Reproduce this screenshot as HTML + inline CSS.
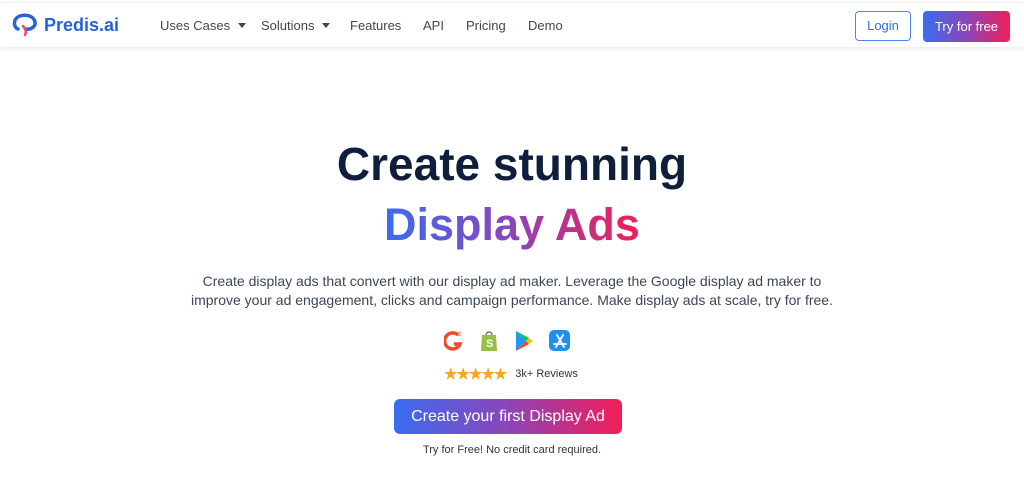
<!DOCTYPE html>
<html><head><meta charset="utf-8"><style>
*{margin:0;padding:0;box-sizing:border-box}
body{width:1024px;height:490px;background:#fff;font-family:"Liberation Sans",sans-serif;position:relative;overflow:hidden}
.nav{position:absolute;top:2px;left:0;width:1024px;height:45px;background:#fff;box-shadow:0 2px 4px rgba(0,0,0,.08);border-top:1px solid #eee}
.logo{position:absolute;left:12px;top:10px;display:flex;align-items:center}
.logo span{font-size:18px;font-weight:bold;color:#2563d6;margin-left:6px}
.menu{position:absolute;top:15px;font-size:13px;color:#3f4651}
.tri{display:inline-block;border-left:4px solid transparent;border-right:4px solid transparent;border-top:5px solid #444;margin-left:8px;vertical-align:2px}
.login{position:absolute;left:855px;top:8px;width:56px;height:30px;border:1px solid #4a86f0;border-radius:4px;color:#2f6fe0;font-size:13px;text-align:center;line-height:28px}
.try{position:absolute;left:923px;top:8px;width:87px;height:31px;border-radius:4px;background:linear-gradient(90deg,#3a6cf0,#8c45b8,#f21e58);color:#fff;font-size:13px;text-align:center;line-height:31px}
h1{position:absolute;top:136px;left:0;width:1024px;text-align:center;font-size:46px;font-weight:bold;color:#0e1e3b;line-height:56px}
.g{position:absolute;top:197px;left:0;width:1024px;text-align:center;font-size:45px;font-weight:bold;line-height:56px}
.g span{background:linear-gradient(90deg,#3a6cf0,#8c45b8,#f21e58);-webkit-background-clip:text;background-clip:text;color:transparent}
p.d{position:absolute;top:272px;left:0;width:1024px;text-align:center;font-size:14px;color:#3b4657;line-height:19px}
.icons{position:absolute;top:330px;left:444px;display:flex;gap:15px}
.icons div{width:20px;height:22px}
.rev{position:absolute;top:365px;left:444px;font-size:11px;color:#333;display:flex;align-items:center}
.rev b{color:#f5a623;font-size:15px;letter-spacing:-1px;margin-right:9px}
.btn{position:absolute;left:394px;top:399px;width:228px;height:35px;border-radius:6px;background:linear-gradient(90deg,#3a6cf0,#8c45b8,#f21e58);color:#fff;font-size:16px;text-align:center;line-height:35px}
.small{position:absolute;top:444px;left:0;width:1024px;text-align:center;font-size:11px;color:#333}
</style></head><body>
<div class="nav">
 <div class="logo"><svg width="26" height="24" viewBox="0 0 26 24"><path d="M6 16C1 14 1 5 8 3c6-2 14 0 15 6 1 5-5 8-9 7" fill="none" stroke="#2563d6" stroke-width="3.5" stroke-linecap="round"/><path d="M11 13c2 3 4 5 2 9" fill="none" stroke="#ee4d6a" stroke-width="2.5" stroke-linecap="round"/></svg><span>Predis.ai</span></div>
 <div class="menu" style="left:160px">Uses Cases<i class="tri"></i></div>
 <div class="menu" style="left:261px">Solutions<i class="tri"></i></div>
 <div class="menu" style="left:350px">Features</div>
 <div class="menu" style="left:423px">API</div>
 <div class="menu" style="left:466px">Pricing</div>
 <div class="menu" style="left:528px">Demo</div>
 <div class="login">Login</div>
 <div class="try">Try for free</div>
</div>
<h1>Create stunning</h1>
<div class="g"><span>Display Ads</span></div>
<p class="d">Create display ads that convert with our display ad maker. Leverage the Google display ad maker to<br>improve your ad engagement, clicks and campaign performance. Make display ads at scale, try for free.</p>
<div class="icons">
 <div><svg width="20" height="22" viewBox="0 0 20 22"><path d="M14 5a8 8 0 1 0 2 9h-6" fill="none" stroke="#ef4a2c" stroke-width="3.5"/><text x="14" y="6" font-size="6" fill="#ef4a2c" font-family="Liberation Sans">2</text></svg></div>
 <div><svg width="20" height="22" viewBox="0 0 20 22"><path d="M3 5h14l1 16H2z" fill="#95bf47"/><path d="M7 5a3 3 0 0 1 6 0" fill="none" stroke="#5e8e3e" stroke-width="1.5"/><text x="7" y="17" font-size="11" font-weight="bold" fill="#fff" font-family="Liberation Sans">S</text></svg></div>
 <div><svg width="20" height="22" viewBox="0 0 20 22"><path d="M2 1l10 10L2 21z" fill="#2196f3"/><path d="M2 1l13 7-3 3z" fill="#00c853"/><path d="M2 21l13-7-3-3z" fill="#f44336"/><path d="M15 8l4 3-4 3-3-3z" fill="#ffc107"/></svg></div>
 <div><svg width="22" height="22" viewBox="0 0 22 22"><rect width="21" height="21" rx="5" fill="#1e90f5"/><path d="M8 5l7 12M14 5L7 17M5 14h12" stroke="#fff" stroke-width="1.8" stroke-linecap="round"/></svg></div>
</div>
<div class="rev"><b>★★★★★</b>3k+ Reviews</div>
<div class="btn">Create your first Display Ad</div>
<div class="small">Try for Free! No credit card required.</div>
</body></html>
